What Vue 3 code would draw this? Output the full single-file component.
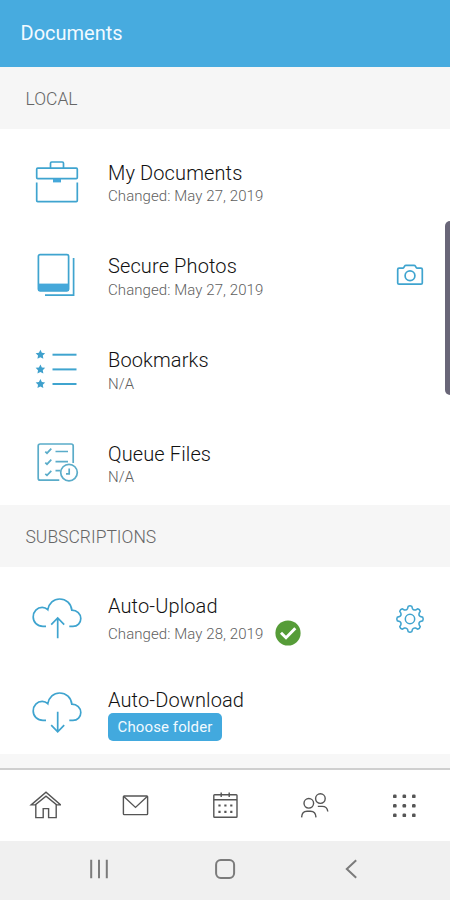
<script setup>
const localItems = [
  { icon: 'briefcase', title: 'My Documents', sub: 'Changed: May 27, 2019' },
  { icon: 'photos', title: 'Secure Photos', sub: 'Changed: May 27, 2019', action: 'camera' },
  { icon: 'bookmarks', title: 'Bookmarks', sub: 'N/A' },
  { icon: 'queue', title: 'Queue Files', sub: 'N/A' },
]

const starRows = [10.7, 25.4, 40]
const dots = [-9.5, 0, 9.5]

function star(cx, cy, r) {
  const pts = []
  for (let i = 0; i < 10; i++) {
    const a = (Math.PI / 5) * i - Math.PI / 2
    const q = i % 2 ? r * 0.5 : r
    pts.push(`${(cx + q * Math.cos(a)).toFixed(2)},${(cy + q * Math.sin(a)).toFixed(2)}`)
  }
  return pts.join(' ')
}

// Eight rounded teeth joined by curved valleys
function gear(c, outer, inner) {
  const p = (r, deg) => {
    const a = (deg * Math.PI) / 180
    return `${(c + r * Math.cos(a)).toFixed(2)} ${(c + r * Math.sin(a)).toFixed(2)}`
  }
  let d = ''
  for (let i = 0; i < 8; i++) {
    const t = i * 45 - 90
    d += `${i ? 'L' : 'M'}${p(outer - 0.6, t - 8)}Q${p(outer + 0.3, t)} ${p(outer - 0.6, t + 8)}`
    d += `L${p(inner + 0.9, t + 13)}Q${p(inner - 0.6, t + 22.5)} ${p(inner + 0.9, t + 32)}`
  }
  return d + 'Z'
}
</script>

<template>
  <div class="screen">
    <header class="header">Documents</header>

    <h2 class="section">LOCAL</h2>
    <ul class="list local">
      <li v-for="item in localItems" :key="item.title" class="row">
        <svg class="lead" viewBox="0 0 52 52">
          <g v-if="item.icon === 'briefcase'">
            <path d="M19.5 12V7.2Q19.5 6 20.7 6H31.3Q32.5 6 32.5 7.2V12" />
            <rect x="5.7" y="12.2" width="40.6" height="10.4" rx="1" />
            <path class="solid" d="M22 22.6H30V26.4H22Z" />
            <path d="M5.7 26.6V44.6Q5.7 45.6 6.7 45.6H45.3Q46.3 45.6 46.3 44.6V26.6" />
          </g>
          <g v-else-if="item.icon === 'photos'">
            <rect x="7.4" y="4.6" width="30.2" height="36.2" rx="1.6" />
            <path class="solid" d="M7.4 33.6H37.6V40.8H7.4Z" />
            <path d="M42.6 8V45.2H14" />
          </g>
          <g v-else-if="item.icon === 'bookmarks'">
            <template v-for="y in starRows" :key="y">
              <polygon class="fill" :points="star(9.4, y, 5)" />
              <path class="bold" :d="`M21.5 ${y}H45.5`" />
            </template>
          </g>
          <g v-else class="soft">
            <path d="M28.3 43.2H9.2Q7.2 43.2 7.2 41.2V9Q7.2 7 9.2 7H40.2Q42.2 7 42.2 9V26" />
            <path d="M14.3 14.6L16 16.2L20.3 11.7M14.3 25.6L16 27.2L20.3 22.7M14.3 36.8L16 38.4L20.3 33.9" />
            <path d="M24.5 14.5H37M24.5 24.7H37M24.5 33.6H29.5" />
            <circle cx="38" cy="35.6" r="8.3" />
            <path d="M38.2 31.5V36.8H35" />
          </g>
        </svg>
        <div class="texts">
          <div class="title">{{ item.title }}</div>
          <div class="sub">{{ item.sub }}</div>
        </div>
        <svg v-if="item.action" class="action" viewBox="0 0 32 32">
          <path d="M5 9.2H8.7Q9.5 9.2 9.9 8.4L10.6 7.1Q11 6.4 12 6.4H20Q21 6.4 21.4 7.1L22.1 8.4Q22.5 9.2 23.3 9.2H27Q28.3 9.2 28.3 10.5V23.9Q28.3 25.2 27 25.2H5Q3.7 25.2 3.7 23.9V10.5Q3.7 9.2 5 9.2Z" />
          <circle cx="16" cy="16.8" r="4.9" />
        </svg>
      </li>
    </ul>

    <h2 class="section">SUBSCRIPTIONS</h2>
    <ul class="list subs">
      <li class="row">
        <svg class="lead" viewBox="0 0 52 52">
          <path d="M15 32.4H12C6.3 32.4 2.2 28.3 2.2 22.9C2.2 17.5 6.2 13.4 11.2 13.4C13.3 13.4 15.2 14.2 16.8 15.7C17.9 9.3 22.7 5 28.6 5C35.3 5 40.2 9.8 40.8 16.2C46 16.2 49.8 19.8 49.8 24.5C49.8 29 46.5 32.4 42 32.4H38.3" />
          <path d="M26.7 44.3V24.2M20.2 30.6L26.7 24L33.2 30.6" />
        </svg>
        <div class="texts">
          <div class="title">Auto-Upload</div>
          <div class="sub">Changed: May 28, 2019</div>
        </div>
        <svg class="done" viewBox="0 0 26 26">
          <circle cx="13" cy="13" r="12.6" />
          <path d="M6 12.8L11 17.8L20.3 8.2" />
        </svg>
        <svg class="action gear" viewBox="0 0 32 32">
          <path :d="gear(16, 13.4, 9.8)" />
          <circle cx="16" cy="16" r="4.7" />
        </svg>
      </li>
      <li class="row">
        <svg class="lead" viewBox="0 0 52 52">
          <path d="M15 32.4H12C6.3 32.4 2.2 28.3 2.2 22.9C2.2 17.5 6.2 13.4 11.2 13.4C13.3 13.4 15.2 14.2 16.8 15.7C17.9 9.3 22.7 5 28.6 5C35.3 5 40.2 9.8 40.8 16.2C46 16.2 49.8 19.8 49.8 24.5C49.8 29 46.5 32.4 42 32.4H38.3" />
          <path d="M26.7 23.7V43.6M20.2 37.2L26.7 43.8L33.2 37.2" />
        </svg>
        <div class="texts last">
          <div class="title">Auto-Download</div>
          <button class="choose">Choose folder</button>
        </div>
      </li>
    </ul>

    <div class="gap"></div>

    <nav class="tabs">
      <svg viewBox="0 0 32 32">
        <path d="M2.2 14.9L17 2.2L31.7 14.9H27.6L17 6.1L6.3 14.9Z" />
        <path d="M6.8 14.5V27.6H14.2V18.6H19.6V27.6H27.2V14.5" />
      </svg>
      <svg viewBox="0 0 32 32">
        <rect x="4.4" y="6" width="24.2" height="18.6" rx="0.8" />
        <path d="M4.8 6.4L16.5 17.4L28.2 6.4" />
      </svg>
      <svg viewBox="0 0 32 32">
        <rect x="4.8" y="4.8" width="23.2" height="22.4" rx="0.8" />
        <path d="M4.8 9.8H28M12.2 2.6V7M20.2 2.6V7" />
        <path class="days" d="M9.4 15.5H11.6M15.3 15.5H17.5M21.2 15.5H23.4M9.4 21.9H11.6M15.3 21.9H17.5M21.2 21.9H23.4" />
      </svg>
      <svg viewBox="0 0 32 32">
        <circle cx="9.8" cy="13.3" r="4.8" />
        <circle cx="21.4" cy="8.6" r="4.8" />
        <path d="M2.6 27.4C2.8 23.5 5.2 21.3 8 21.3H11.5C14.5 21.3 16.8 23.5 17 27.4M18.8 16.4H23.2C26.3 16.4 28.4 18.3 28.8 21.5" />
      </svg>
      <svg viewBox="0 0 32 32" class="grid">
        <template v-for="y in dots" :key="y">
          <rect v-for="x in dots" :key="x" :x="13.5 + x" :y="14 + y" width="3.6" height="3.6" rx="1.2" />
        </template>
      </svg>
    </nav>

    <nav class="system">
      <svg viewBox="0 0 26 26"><path d="M5.2 3.8V22.2M13 3.8V22.2M20.8 3.8V22.2" /></svg>
      <svg viewBox="0 0 26 26"><rect x="4.1" y="4.1" width="18" height="17.8" rx="4.6" /></svg>
      <svg viewBox="0 0 26 26"><path d="M18.2 4.2L8.8 13L18.2 21.8" /></svg>
    </nav>

    <div class="edge-handle"></div>
  </div>
</template>

<style>
body {
  margin: 0;
  background: #fff;
}
</style>

<style scoped>
.screen {
  position: relative;
  display: flex;
  flex-direction: column;
  width: 450px;
  height: 900px;
  overflow: hidden;
  background: #fff;
  font-family: Roboto, "Liberation Sans", sans-serif;
}
.header {
  box-sizing: border-box;
  height: 67px;
  padding-left: 20.5px;
  background: #47abdf;
  color: #f2faff;
  font-size: 20px;
  line-height: 66px;
}
.section {
  height: 62px;
  margin: 0;
  padding-left: 25.5px;
  background: #f6f6f6;
  color: #666;
  font-size: 17.5px;
  font-weight: 300;
  line-height: 64px;
}
.list {
  margin: 0;
  padding: 0;
  list-style: none;
}
.local {
  height: 376px;
}
.subs {
  height: 187px;
}
.row {
  display: flex;
  height: 93.8px;
  padding: 0 24px 0 31px;
  box-sizing: border-box;
}
.lead {
  flex: none;
  width: 52px;
  height: 52px;
  margin-top: 27px;
  margin-right: 25px;
}
.lead,
.action {
  fill: none;
  stroke: #3fa4cf;
  stroke-width: 1.7;
}
.solid {
  fill: #45a8da;
  stroke: none;
}
.fill {
  fill: #3fa0cc;
  stroke: none;
}
.bold {
  stroke-width: 2;
}
.soft {
  stroke: #5aacc9;
}
.texts {
  display: flex;
  flex-direction: column;
  align-items: flex-start;
  padding-top: 31.5px;
}
.title {
  color: #111;
  font-size: 20px;
  font-weight: 300;
  line-height: 24px;
  letter-spacing: 0.12px;
  white-space: nowrap;
}
.sub {
  color: #606060;
  font-size: 15px;
  font-weight: 300;
  line-height: 20px;
  margin-top: 1.5px;
  letter-spacing: 0.08px;
  white-space: nowrap;
}
.subs .texts {
  padding-top: 26.5px;
}
.subs .texts.last {
  padding-top: 27.3px;
}
.subs .sub {
  margin-top: 6px;
}
.action {
  flex: none;
  width: 32px;
  height: 32px;
  margin: 36.5px -0.4px 0 auto;
}
.action.gear {
  stroke-width: 1.5;
  margin-top: 35.8px;
}
.done {
  position: relative;
  width: 26px;
  height: 26px;
  margin: 53px 0 0 12px;
  fill: #569c38;
}
.done path {
  fill: none;
  stroke: #fff;
  stroke-width: 2.9;
}
.choose {
  width: 114px;
  height: 28px;
  margin: 0.7px 0 0;
  padding: 0;
  border: 0;
  border-radius: 5px;
  background: #42a9de;
  color: #f1faff;
  font: 15px/28px Roboto, "Liberation Sans", sans-serif;
  letter-spacing: 0.1px;
}
.gap {
  height: 14px;
  background: #f7f7f7;
}
.tabs {
  box-sizing: border-box;
  display: grid;
  grid-template-columns: repeat(5, 1fr);
  place-items: center;
  height: 73px;
  border-top: 2px solid #cfcfcf;
  background: #fff;
}
.tabs svg {
  width: 32px;
  height: 32px;
  fill: none;
  stroke: #555;
  stroke-width: 1.4;
}
.tabs .days {
  stroke-width: 2.2;
}
.tabs .grid {
  fill: #555;
  stroke: none;
}
.system {
  display: flex;
  justify-content: center;
  align-items: center;
  gap: 100.3px;
  height: 59px;
  padding-bottom: 3px;
  box-sizing: border-box;
  background: #f0f0f0;
}
.system svg {
  width: 26px;
  height: 26px;
  fill: none;
  stroke: #7b7b7b;
  stroke-width: 2;
}
.edge-handle {
  position: absolute;
  top: 221px;
  right: 0;
  width: 5px;
  height: 174px;
  border-radius: 5px 0 0 5px;
  background: #696678;
}
</style>
